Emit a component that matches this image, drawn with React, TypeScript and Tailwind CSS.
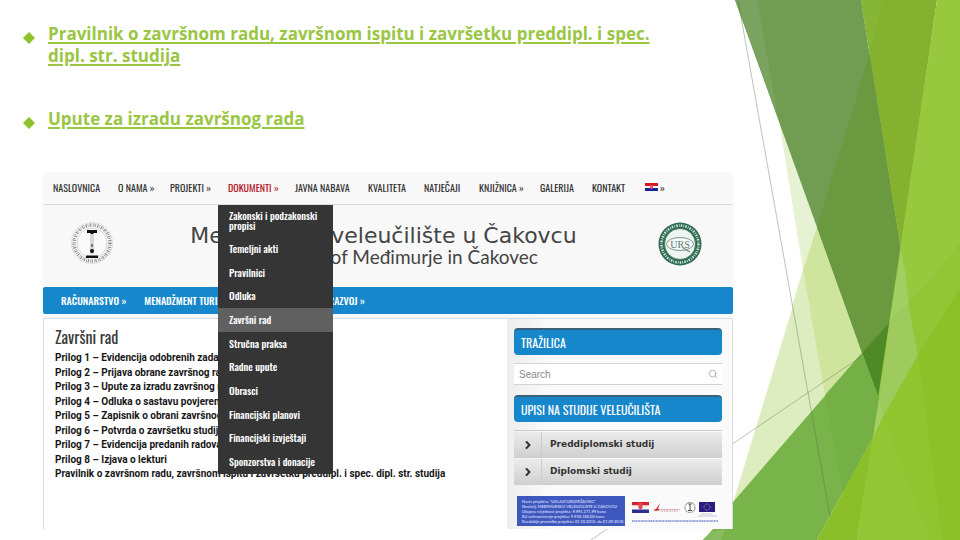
import type { ReactNode } from "react";
import { Search, ChevronRight } from "lucide-react";

const topNav: { label: string; arrow?: boolean; active?: boolean }[] = [
  { label: "NASLOVNICA" },
  { label: "O NAMA", arrow: true },
  { label: "PROJEKTI", arrow: true },
  { label: "DOKUMENTI", arrow: true, active: true },
  { label: "JAVNA NABAVA" },
  { label: "KVALITETA" },
  { label: "NATJEČAJI" },
  { label: "KNJIŽNICA", arrow: true },
  { label: "GALERIJA" },
  { label: "KONTAKT" },
];

const menu = [
  "Zakonski i podzakonski propisi",
  "Temeljni akti",
  "Pravilnici",
  "Odluka",
  "Završni rad",
  "Stručna praksa",
  "Radne upute",
  "Obrasci",
  "Financijski planovi",
  "Financijski izvještaji",
  "Sponzorstva i donacije",
];

const documents = [
  "Prilog 1 – Evidencija odobrenih zadataka",
  "Prilog 2 – Prijava obrane završnog rada",
  "Prilog 3 – Upute za izradu završnog rada",
  "Prilog 4 – Odluka o sastavu povjerenstva",
  "Prilog 5 – Zapisnik o obrani završnog rada",
  "Prilog 6 – Potvrda o završetku studija",
  "Prilog 7 – Evidencija predanih radova",
  "Prilog 8 – Izjava o lekturi",
  "Pravilnik o završnom radu, završnom ispitu i završetku preddipl. i spec. dipl. str. studija",
];

function Facets() {
  return (
    <svg
      className="absolute right-0 top-0 -z-10 h-full"
      viewBox="590 0 370 540"
      preserveAspectRatio="xMaxYMin slice"
      aria-hidden="true"
    >
      <polygon points="779,120 803,270 817,227" fill="#e7f1d3" />
      <polygon points="817,227 733,503 862,353" fill="#ddedc0" />
      <polygon points="817,227 803,270 825,395 862,353" fill="#cfe49d" />
      <polygon points="803,270 811,314 792,306" fill="#ddedc0" />
      <polygon points="735,0 861,0 901,250 898,270 879,399" fill="#719d52" />
      <polygon points="735,0 757,0 778,117" fill="#79a35f" />
      <polygon points="870,53 817,227 862,353 890,322 901,250" fill="#6a993f" />
      <polygon points="862,353 890,322 879,399" fill="#4e8a25" />
      <polygon points="861,0 937,0 901,250" fill="#84b22f" />
      <polygon points="861,0 882,0 870,53" fill="#87b536" />
      <polygon points="937,0 960,0 960,540 857,540" fill="#97c83d" />
      <polygon points="901,250 904,270 918,355 873,437 879,399 890,320" fill="#9fca5d" />
      <polygon points="901,250 905,270 908,304 890,320" fill="#a2cf62" />
      <polygon points="960,243 933,277 908,303 918,355 960,288" fill="#93c535" />
      <polygon points="862,353 733,502 733,529 713,529 703,540 817,540 873,437 879,399" fill="#78b44a" />
      <polygon points="862,353 825,395 843,493 873,437 879,399" fill="#74b046" />
      <polygon points="711,532 725,529 721,540 703,540" fill="#87bd60" />
      <polygon points="879,399 883,417 873,437" fill="#a4d063" />
      <polygon points="817,540 873,437 857,540" fill="#8abf29" />
      <polygon points="883,417 873,437 857,540 930,540" fill="#93c634" />
      <polygon points="883,417 918,355 942,540 930,540" fill="#91c42e" />
      <polygon points="960,288 918,355 942,540 960,540" fill="#8dc127" />
      <g stroke="#5f6b52" strokeOpacity="0.5" strokeWidth="0.8">
        <line x1="738" y1="0" x2="830" y2="516" />
        <line x1="862" y1="356" x2="591" y2="540" />
      </g>
    </svg>
  );
}

function Flag() {
  return (
    <svg className="h-2 w-[13px]" viewBox="0 0 13 8" role="img" aria-label="Hrvatski">
      <rect width="13" height="8" fill="#fff" />
      <rect width="13" height="3" fill="#d9141e" />
      <rect y="5" width="13" height="3" fill="#17228f" />
      <path d="M5 2h3v3l-1.500 1.500L5 5z" fill="#e2565b" />
    </svg>
  );
}

function SchoolSeal() {
  return (
    <svg className="size-[42px]" viewBox="0 0 42 42" aria-hidden="true">
      <circle cx="21" cy="21" r="20.500" fill="#fdfdfd" stroke="#c5c5c5" strokeWidth="0.500" />
      <circle cx="21" cy="21" r="18" fill="none" stroke="#555" strokeWidth="3.500" strokeDasharray="1.100 0.900 0.600 1.300" opacity="0.7" />
      <circle cx="21" cy="21" r="15" fill="#fafafa" stroke="#aaa" strokeWidth="0.500" />
      <path d="M16 8h10v3h-3l-1 1h-2l-1-1h-3zM15 33.500h12v2.500H15z" fill="#111" />
      <path d="M20 12v20M22 12v20" stroke="#999" strokeWidth="0.700" />
      <circle cx="21" cy="29" r="2" fill="#111" />
      <path d="M20 22h2v3h-2z" fill="#777" />
    </svg>
  );
}

function UrsSeal() {
  return (
    <svg className="size-[44px]" viewBox="0 0 44 44" role="img" aria-label="URS">
      <circle cx="22" cy="22" r="21.500" fill="#2f6a50" />
      <circle cx="22" cy="22" r="18.500" fill="none" stroke="#cfe3d8" strokeWidth="2.600" strokeDasharray="1.500 1.200 0.800 1.100" />
      <circle cx="22" cy="22" r="15.500" fill="#eef4f1" stroke="#2f6a50" strokeWidth="0.800" />
      <ellipse cx="22" cy="22" rx="13.500" ry="6.500" fill="#f5f8f6" stroke="#6d8f80" strokeWidth="0.900" />
      <path d="M25 26l7 4" stroke="#6d8f80" strokeWidth="1.200" />
      <text x="22" y="25.500" textAnchor="middle" fontSize="10" fontFamily="Liberation Serif, serif" fill="#557a6b">URS</text>
    </svg>
  );
}

function FundingLogos() {
  return (
    <svg className="h-[30px] w-[90px]" viewBox="0 0 90 30" aria-hidden="true">
      <rect x="1" y="6" width="17" height="3.500" fill="#d9202c" />
      <rect x="1" y="9.500" width="17" height="4" fill="#f3f3f5" />
      <rect x="1" y="13.500" width="17" height="3.500" fill="#2b2f8f" />
      <path d="M7.500 7h4v5l-2 2-2-2z" fill="#dd4a52" />
      <path d="M22 14l3-1 4-6-2 6 3 1-5 1z" fill="#c9353f" />
      <path d="M30 13.500h19M30 15h17" stroke="#c98a90" strokeWidth="0.800" strokeDasharray="2 0.600" />
      <circle cx="59" cy="11.500" r="5" fill="#fff" stroke="#888" strokeWidth="1.200" strokeDasharray="1 0.500" />
      <path d="M57.500 8h3M59 8v6M57 14.500h4" stroke="#333" strokeWidth="0.900" />
      <rect x="68" y="6" width="16" height="10" fill="#2b1a86" />
      <circle cx="76" cy="11" r="3" fill="none" stroke="#c9b45a" strokeWidth="0.900" strokeDasharray="0.800 0.770" />
      <path d="M70 18h12M67 20h19" stroke="#9a9ac4" strokeWidth="0.700" strokeDasharray="1.500 0.500" />
      <path d="M1 25h86" stroke="#7b86cf" strokeWidth="1.300" strokeDasharray="1.600 0.500 0.900 0.400" />
    </svg>
  );
}

function SlideLink({ children }: { children: ReactNode }) {
  return (
    <li className="flex">
      <svg className="mt-[9px] size-3 shrink-0" viewBox="0 0 12 12" aria-hidden="true">
        <path d="M6 0l6 6-6 6-6-6z" fill="#8fc32b" />
      </svg>
      <a href="#dokument" className="ml-[13px] underline decoration-2 underline-offset-2">
        {children}
      </a>
    </li>
  );
}

function SideHeading({ children }: { children: ReactNode }) {
  return (
    <h3 className="flex h-[27px] items-center rounded border-t-2 border-[#3c607c] bg-[#1787cc] px-[7px] font-['Oswald','Liberation_Sans',sans-serif] text-[12px] font-normal text-white">
      {children}
    </h3>
  );
}

function Website() {
  return (
    <section className="bg-[#f8f8f8] font-['Oswald','Liberation_Sans',sans-serif] text-[10px] text-[#333]">
      <nav className="grid h-[33px] grid-cols-[65px_52px_58px_67px_73px_56px_55px_61px_52px_53px_auto] items-start border-b border-[#d5dbdb] pl-[10px] whitespace-nowrap">
        {topNav.map((item) => (
          <div key={item.label} className="relative flex h-[30px] items-center">
            <a href="#nav" className={item.active ? "text-[#b5121b]" : "text-[#333]"}>
              {item.label}
              {item.arrow && " »"}
            </a>
            {item.active && (
              <ul className="absolute top-[33px] -left-[10px] z-10 flex h-[269px] w-[115px] flex-col bg-[#353535] font-medium text-white">
                {menu.map((entry) => (
                  <li
                    key={entry}
                    className={
                      entry === "Završni rad"
                        ? "flex flex-1 items-center bg-[#606060]"
                        : "flex flex-1 items-center first:h-8 first:flex-none"
                    }
                  >
                    <a href="#menu" className="w-full px-[11px] leading-[10px] whitespace-normal">
                      {entry}
                    </a>
                  </li>
                ))}
              </ul>
            )}
          </div>
        ))}
        <a href="#hr" className="flex h-[30px] items-center gap-0.5">
          <Flag />
          <span>»</span>
        </a>
      </nav>

      <header className="flex items-start justify-between pt-[17px] pr-[31px] pb-[21px] pl-[28px]">
        <SchoolSeal />
        <div className="pt-[3px] pr-1 text-center text-[#444]">
          <h1 className="font-['DejaVu_Sans',sans-serif] text-[22px] leading-[22px]">
            Međimursko veleučilište u Čakovcu
          </h1>
          <p className="font-['Lato',sans-serif] text-[19px] leading-[19px]">
            Polytechnic of Međimurje in Čakovec
          </p>
        </div>
        <UrsSeal />
      </header>

      <nav className="flex h-[27px] items-center gap-[18px] rounded-xs bg-[#1787cc] pl-[18px] font-medium whitespace-nowrap text-white">
        <a href="#racunarstvo">RAČUNARSTVO&nbsp;»</a>
        <a href="#menadzment">MENADŽMENT TURIZMA I SPORTA&nbsp;»</a>
        <a href="#razvoj">ODRŽIV RAZVOJ&nbsp;»</a>
      </nav>

      <div className="mt-1 flex border border-b-0 border-[#d9dde0] bg-white">
        <article className="min-w-0 flex-1 px-[11px] pt-[6px]">
          <h2 className="text-[16px] leading-[24px] text-[#3a3a3a]">Završni rad</h2>
          <ul className="mt-[2px] flex h-[130px] flex-col justify-between font-['Roboto','Liberation_Sans',sans-serif] text-[10px] leading-[14px] font-bold whitespace-nowrap text-[#161616]">
            {documents.map((doc) => (
              <li key={doc}>{doc}</li>
            ))}
          </ul>
        </article>

        <aside className="w-[225px] shrink-0 bg-linear-to-r from-[#eeeeee] to-[#fafafa] to-20% pt-[9px] pr-[10px] pl-[7px]">
          <SideHeading>TRAŽILICA</SideHeading>
          <form className="mt-[8px] flex h-[22px] items-center border-y border-[#d8d2ca] bg-white pr-1 pl-[5px]">
            <input
              type="search"
              aria-label="Search"
              placeholder="Search"
              className="min-w-0 flex-1 bg-transparent font-['Liberation_Sans',sans-serif] text-[10px] text-[#777] outline-none placeholder:text-[#8a8a8a]"
            />
            <button type="submit" aria-label="Traži">
              <Search className="size-[10px] text-[#aaa]" />
            </button>
          </form>
          <div className="mt-[10px]">
            <SideHeading>UPISI NA STUDIJE VELEUČILIŠTA</SideHeading>
          </div>
          <ul className="mt-[8px] border-t border-[#cccccc] font-['DejaVu_Sans',sans-serif] text-[9px] font-bold text-[#333]">
            {["Preddiplomski studij", "Diplomski studij"].map((study) => (
              <li key={study} className="mt-px bg-linear-to-b from-[#ececec] to-[#cfcfcf]">
                <a href="#studij" className="flex h-[26px] items-center">
                  <span className="flex h-full w-[28px] items-center justify-center border-r border-[#cccccc]">
                    <ChevronRight className="size-[12px]" strokeWidth={4} />
                  </span>
                  <span className="pl-[8px]">{study}</span>
                </a>
              </li>
            ))}
          </ul>
          <div className="mt-[11px] flex items-start gap-[6px] pb-[3px] pl-[3px]">
            <p className="h-[30px] w-[108px] bg-[#3f58be] px-[5px] pt-[3px] font-['Lato',sans-serif] text-[4px] leading-[5px] font-bold whitespace-nowrap text-[#c5cff5]">
              Naziv projekta: "UKLJUČI(SE)DRŽAVNO"
              <br />
              Nositelj: MEĐIMURSKO VELEUČILIŠTE U ČAKOVCU
              <br />
              Ukupna vrijednost projekta: 9.991.371,99 kuna
              <br />
              EU sufinanciranje projekta: 9.950.180,00 kuna
              <br />
              Razdoblje provedbe projekta: 01.10.2015. do 01.09.2018.
            </p>
            <FundingLogos />
          </div>
        </aside>
      </div>
    </section>
  );
}

export default function App() {
  return (
    <main className="relative isolate min-h-screen overflow-hidden bg-white pb-[11px]">
      <Facets />
      <ul className="flex flex-col gap-[41px] pt-[23px] pr-[300px] pl-[23px] font-['Open_Sans','Noto_Sans',sans-serif] text-[17px] leading-[22px] font-bold text-[#9ac644]">
        <SlideLink>
          Pravilnik o završnom radu, završnom ispitu i završetku preddipl. i spec.
          <br />
          dipl. str. studija
        </SlideLink>
        <SlideLink>Upute za izradu završnog rada</SlideLink>
      </ul>
      <div className="mt-[42px] mr-[227px] ml-[43px]">
        <Website />
      </div>
    </main>
  );
}
